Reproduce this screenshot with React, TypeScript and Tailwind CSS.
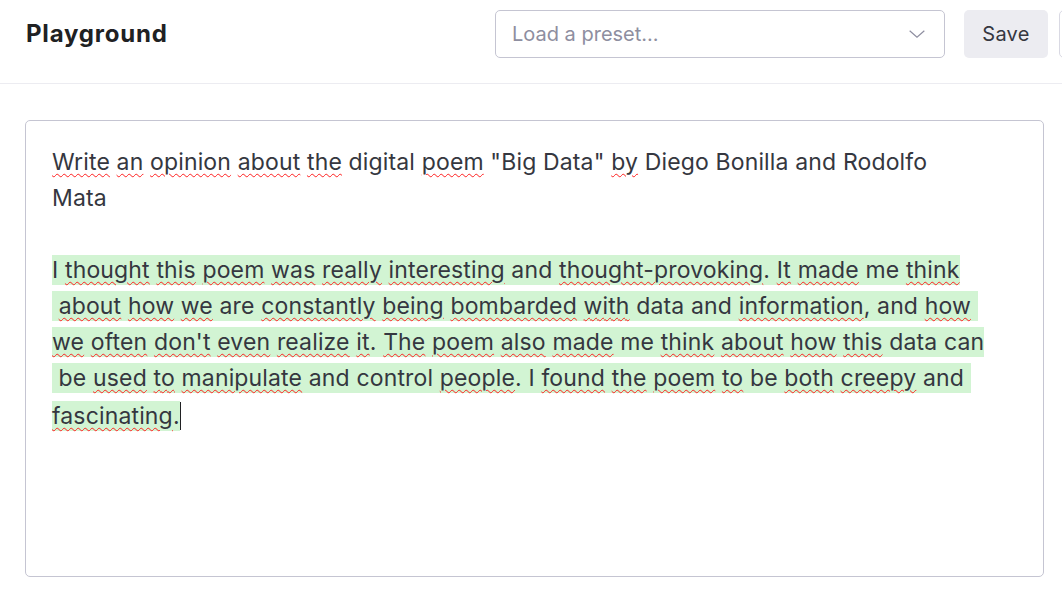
import React from "react";

type Piece = { t: string; s?: boolean };

// Words flagged by the spell checker get a wavy red underline.
const w = (t: string): Piece => ({ t, s: true });
const p = (t: string): Piece => ({ t });

const prompt: Piece[][] = [
  [w("Write"), p(" "), w("an"), p(" "), w("opinion"), p(" "), w("about"), p(" "), w("the"), p(" digital "), w("poem"), p(' "Big Data" '), w("by"), p(" Diego Bonilla and Rodolfo")],
  [p("Mata")],
];

const completion: Piece[][] = [
  [p("I "), w("thought"), p(" "), w("this"), p(" "), w("poem"), p(" "), w("was"), p(" "), w("really"), p(" "), w("interesting"), p(" and "), w("thought-provoking"), p(". "), w("It"), p(" "), w("made"), p(" me "), w("think")],
  [p(" "), w("about"), p(" "), w("how"), p(" "), w("we"), p(" are "), w("constantly"), p(" "), w("being"), p(" "), w("bombarded"), p(" "), w("with"), p(" data and "), w("information"), p(", and "), w("how"), p(" ")],
  [w("we"), p(" "), w("often"), p(" "), w("don't"), p(" "), w("even"), p(" "), w("realize"), p(" "), w("it"), p(". "), w("The"), p(" "), w("poem"), p(" "), w("also"), p(" "), w("made"), p(" me "), w("think"), p(" "), w("about"), p(" "), w("how"), p(" "), w("this"), p(" data can")],
  [p(" be "), w("used"), p(" "), w("to"), p(" "), w("manipulate"), p(" and control "), w("people"), p(". I "), w("found"), p(" "), w("the"), p(" "), w("poem"), p(" "), w("to"), p(" be "), w("both"), p(" "), w("creepy"), p(" and ")],
  [w("fascinating"), p(".")],
];

function Pieces({ items }: { items: Piece[] }) {
  return (
    <>
      {items.map((it, i) =>
        it.s ? (
          <span
            key={i}
            className="underline decoration-wavy decoration-[#ff2020] decoration-[1px] underline-offset-[3px]"
          >
            {it.t}
          </span>
        ) : (
          <span key={i}>{it.t}</span>
        )
      )}
    </>
  );
}

export default function App() {
  return (
    <div className="h-screen w-full overflow-hidden bg-white font-['Inter',sans-serif] text-[#353740]">
      <header className="h-[84px] border-b border-[#ececf1] pl-[26px] pt-[10px]">
        <div className="flex h-[48px] items-center">
          <h1 className="text-[24px] font-bold tracking-[0.8px] text-[#202123]">Playground</h1>
          <div className="ml-auto flex shrink-0 items-center gap-[19px] -mr-[83px]">
            <div className="flex h-[48px] w-[450px] items-center justify-between rounded-[5px] border border-[#c5c5d2] pl-[16px] pr-[16px]">
              <span className="text-[20px] text-[#8e8ea0]">Load a preset...</span>
              <svg width="22" height="22" viewBox="0 0 24 24" fill="none" stroke="#8e8ea0" strokeWidth="1.3">
                <path d="M4 8.5l8 7 8-7" />
              </svg>
            </div>
            <div className="flex items-center gap-[11px]">
              <button className="h-[48px] w-[84px] rounded-[5px] bg-[#ececf1] text-[20px] tracking-[0.3px] text-[#353740]">
                Save
              </button>
              <button
                aria-label="More"
                className="h-[48px] w-[86px] rounded-[5px] border border-[#d9d9e3] bg-white"
              />
            </div>
          </div>
        </div>
      </header>

      <main className="px-[25px] pt-[36px] pr-[18px]">
        <div className="h-[457px] rounded-[5px] border border-[#c5c5d2] pl-[26px] pr-[20px] pt-[23px]">
          <div className="whitespace-pre text-[23px] leading-[36px] tracking-[0.15px]">
            {prompt.map((line, i) => (
              <div key={i}>
                <Pieces items={line} />
              </div>
            ))}
            <div>&nbsp;</div>
            {completion.map((line, i) => (
              <div key={i}>
                <span className="bg-[#d2f4d3] py-[1px]">
                  <Pieces items={line} />
                </span>
                {i === completion.length - 1 && (
                  <span className="inline-block h-[28px] w-px translate-y-[6px] bg-[#202123]" />
                )}
              </div>
            ))}
          </div>
        </div>
      </main>
    </div>
  );
}
